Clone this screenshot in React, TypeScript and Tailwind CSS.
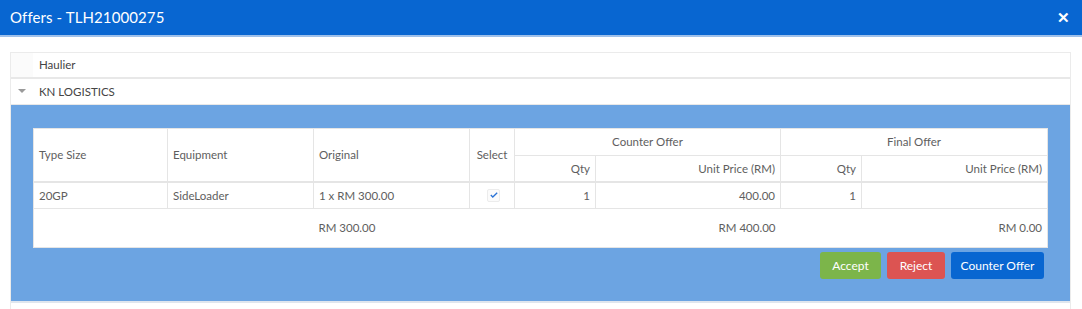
import React from "react";

export default function App() {
  const font = { fontFamily: "Lato, 'Noto Sans', sans-serif" };
  const cell = "border border-[#e5e5e5] px-[5px] font-normal";
  return (
    <div className="w-[1082px] h-[309px] bg-white overflow-hidden text-[11.5px] text-[#5e5e5e]" style={font}>
      <div className="h-[37px] bg-[#0866d1] border-b-2 border-[#9ec0ea] flex items-center justify-between pl-[10px] pr-[12px]">
        <span className="text-white text-[15px] tracking-[0.1px]">Offers - TLH21000275</span>
        <span className="text-white text-[15px] font-bold leading-none">✕</span>
      </div>
      <div className="mt-[15px] mx-[10px] w-[1061px] border border-[#ebebeb] border-b-0">
        <div className="h-[26px] flex items-center border-b-2 border-[#e8e8e8]">
          <div className="w-[22px] h-full bg-[#fbfbfb]" />
          <span className="pl-[6px] text-[#444]">Haulier</span>
        </div>
        <div className="h-[26px] flex items-center border-b border-[#e8e8e8]">
          <div className="w-[22px] flex justify-center">
            <svg width="8" height="5" viewBox="0 0 8 5"><path d="M0 0h8L4 4z" fill="#9a9a9a" /></svg>
          </div>
          <span className="pl-[6px] text-[#444]">KN LOGISTICS</span>
        </div>
        <div className="bg-[#6ca4e2] pt-[23px] pl-[22px] pr-[22px] pb-[22px] border-b-2 border-[#dfe6ee]">
          <table className="w-[1014px] border-collapse bg-white table-fixed">
            <colgroup>
              <col className="w-[134px]" />
              <col className="w-[146px]" />
              <col className="w-[156px]" />
              <col className="w-[45px]" />
              <col className="w-[81px]" />
              <col className="w-[185px]" />
              <col className="w-[81px]" />
              <col className="w-[186px]" />
            </colgroup>
            <thead>
              <tr className="h-[27px]">
                <th rowSpan={2} className={`${cell} text-left border-b-2`}>Type Size</th>
                <th rowSpan={2} className={`${cell} text-left border-b-2`}>Equipment</th>
                <th rowSpan={2} className={`${cell} text-left border-b-2`}>Original</th>
                <th rowSpan={2} className={`${cell} text-center border-b-2 px-0`}>Select</th>
                <th colSpan={2} className={`${cell} text-center`}>Counter Offer</th>
                <th colSpan={2} className={`${cell} text-center`}>Final Offer</th>
              </tr>
              <tr className="h-[26px]">
                <th className={`${cell} text-right border-b-2`}>Qty</th>
                <th className={`${cell} text-right border-b-2`}>Unit Price (RM)</th>
                <th className={`${cell} text-right border-b-2`}>Qty</th>
                <th className={`${cell} text-right border-b-2`}>Unit Price (RM)</th>
              </tr>
            </thead>
            <tbody>
              <tr className="h-[27px]">
                <td className={cell}>20GP</td>
                <td className={cell}>SideLoader</td>
                <td className={cell}>1 x RM 300.00</td>
                <td className={`${cell} px-0`}>
                  <div className="ml-[12px] w-[13px] h-[13px] rounded-[2px] border border-[#ececec] bg-[#fbfbfb] flex items-center justify-center">
                    <svg width="8" height="6" viewBox="0 0 8 6"><path d="M0.8 3l2 2L7.2 0.8" stroke="#2b73d6" strokeWidth="1.3" fill="none" /></svg>
                  </div>
                </td>
                <td className={`${cell} text-right`}>1</td>
                <td className={`${cell} text-right`}>400.00</td>
                <td className={`${cell} text-right`}>1</td>
                <td className={`${cell} text-right`}></td>
              </tr>
              <tr className="h-[39px]">
                <td className={`${cell} border-r-0`} colSpan={2}></td>
                <td className={`${cell} border-x-0`} colSpan={1}>RM 300.00</td>
                <td className={`${cell} border-x-0 text-right`} colSpan={3}>RM 400.00</td>
                <td className={`${cell} border-l-0 text-right`} colSpan={2}>RM 0.00</td>
              </tr>
            </tbody>
          </table>
          <div className="flex justify-end gap-[6px] mt-[4px] pr-[4px]">
            <button className="w-[61px] h-[27px] rounded-[3px] bg-[#7cb54a] text-white text-[12px]">Accept</button>
            <button className="w-[58px] h-[27px] rounded-[3px] bg-[#dc5452] text-white text-[12px]">Reject</button>
            <button className="w-[93px] h-[27px] rounded-[3px] bg-[#0866d1] text-white text-[12px]">Counter Offer</button>
          </div>
        </div>
        <div className="h-[20px]" />
      </div>
    </div>
  );
}
